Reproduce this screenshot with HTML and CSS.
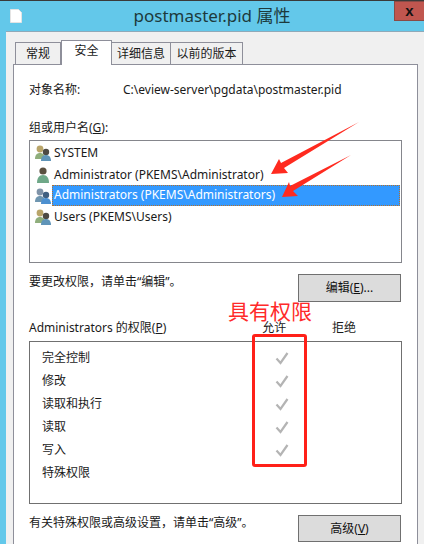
FILE: index.html
```html
<!DOCTYPE html>
<html lang="zh-CN">
<head>
  <meta charset="UTF-8">
  <meta name="viewport" content="width=device-width, initial-scale=1.0">
  <title>postmaster.pid 属性</title>
  <link rel="stylesheet" href="styles.css">
</head>
<body>
  <svg width="0" height="0" class="defs">
    <defs>
      <symbol id="group" viewBox="0 0 18 18">
        <circle cx="6" cy="5" r="3.4" fill="#b9a56a"/>
        <path d="M1 15c0-4 2-6 5-6s5 2 5 6z" fill="#8fae7c"/>
        <circle cx="12" cy="8" r="3.2" fill="#4d4a44"/>
        <path d="M7 17c0-4 2-6 5-6s5 2 5 6z" fill="#5f94b8"/>
      </symbol>
      <symbol id="group-sel" viewBox="0 0 18 18">
        <circle cx="6" cy="5" r="3.4" fill="#7f93a8"/>
        <path d="M1 15c0-4 2-6 5-6s5 2 5 6z" fill="#6f96b0"/>
        <circle cx="12" cy="8" r="3.2" fill="#3f5f80"/>
        <path d="M7 17c0-4 2-6 5-6s5 2 5 6z" fill="#4d90d0"/>
      </symbol>
      <symbol id="user" viewBox="0 0 18 18">
        <circle cx="9" cy="5" r="3.6" fill="#5a5040"/>
        <path d="M3 17c0-5 2-8 6-8s6 3 6 8z" fill="#6fa888"/>
      </symbol>
      <symbol id="tick" viewBox="0 0 14 14">
        <path d="M1.5 7.5 5.5 12 12.5 2" fill="none" stroke="#b4b4b4" stroke-width="2.2"/>
      </symbol>
    </defs>
  </svg>

  <div class="window">
    <div class="titlebar">
      <svg class="file-icon" width="12" height="14" viewBox="0 0 12 14">
        <path d="M0.5 0.5h8l3 3v10h-11z" fill="#fff" stroke="#e4e4e4"/>
      </svg>
      <span class="title">postmaster.pid 属性</span>
      <div class="close">x</div>
    </div>

    <div class="dialog">
      <div class="tabs">
        <div class="tab tab-first">常规</div>
        <div class="tab tab-active">安全</div>
        <div class="tab tab-details">详细信息</div>
        <div class="tab tab-prev">以前的版本</div>
      </div>

      <div class="panel">
        <div class="object-row">
          <span class="object-label">对象名称:</span>
          <span>C:\eview-server\pgdata\postmaster.pid</span>
        </div>

        <div class="group-label">组或用户名(<u>G</u>):</div>
        <div class="listbox">
          <div class="user-row">
            <svg class="user-icon"><use href="#group"/></svg>
            <span class="user-name">SYSTEM</span>
          </div>
          <div class="user-row">
            <svg class="user-icon"><use href="#user"/></svg>
            <span class="user-name">Administrator (PKEMS\Administrator)</span>
          </div>
          <div class="user-row">
            <svg class="user-icon"><use href="#group-sel"/></svg>
            <span class="user-name selected">Administrators (PKEMS\Administrators)</span>
          </div>
          <div class="user-row">
            <svg class="user-icon"><use href="#group"/></svg>
            <span class="user-name">Users (PKEMS\Users)</span>
          </div>
        </div>

        <div class="action-row edit-row">
          <span>要更改权限，请单击“编辑”。</span>
          <button class="btn">编辑(<u>E</u>)...</button>
        </div>

        <div class="perm-head">
          <span class="perm-title">Administrators 的权限(<u>P</u>)</span>
          <span class="perm-col">允许</span>
          <span class="perm-col">拒绝</span>
        </div>
        <div class="permbox">
          <div class="perm-row"><span class="perm-name">完全控制</span><svg class="tick"><use href="#tick"/></svg></div>
          <div class="perm-row"><span class="perm-name">修改</span><svg class="tick"><use href="#tick"/></svg></div>
          <div class="perm-row"><span class="perm-name">读取和执行</span><svg class="tick"><use href="#tick"/></svg></div>
          <div class="perm-row"><span class="perm-name">读取</span><svg class="tick"><use href="#tick"/></svg></div>
          <div class="perm-row"><span class="perm-name">写入</span><svg class="tick"><use href="#tick"/></svg></div>
          <div class="perm-row"><span class="perm-name">特殊权限</span></div>
        </div>

        <div class="action-row advanced-row">
          <span>有关特殊权限或高级设置，请单击“高级”。</span>
          <button class="btn">高级(<u>V</u>)</button>
        </div>
      </div>
    </div>

    <!-- red annotations drawn on top of the screenshot -->
    <svg class="marks" width="424" height="544" viewBox="0 0 424 544">
      <path d="M359 122 281 163 279 159 271 174 288 173 284 168z" fill="#ff2a1f"/>
      <path d="M351 155 290 186 289 182 282 197 298 196 293 191z" fill="#ff2a1f"/>
    </svg>
    <div class="note-text">具有权限</div>
    <div class="note-box"></div>
  </div>
</body>
</html>
```

FILE: styles.css
```css
* { box-sizing: border-box; }

html, body {
  margin: 0;
  padding: 0;
}

body {
  width: 424px;
  height: 544px;
  overflow: hidden;
  font-family: "Noto Sans", "Noto Sans CJK SC", sans-serif;
  font-size: 12px;
  line-height: 16px;
  color: #1a1a1a;
}

.defs { position: absolute; }

.window {
  position: relative;
  width: 424px;
  height: 544px;
  overflow: hidden;
  background: #63c8ea;
  border-top: 1px solid #3a3a3a;
}

.titlebar {
  position: relative;
  height: 30px;
  display: flex;
  align-items: center;
  justify-content: center;
}

.file-icon {
  position: absolute;
  left: 10px;
  top: 8px;
}

.title {
  font-size: 17px;
  color: #1d3a3c;
}

.close {
  position: absolute;
  right: 0;
  top: 0;
  width: 30px;
  height: 20px;
  background: #c0564f;
  border: 1px solid #8a4a46;
  border-right: 0;
  color: #111;
  font-family: "Liberation Sans", sans-serif;
  font-size: 15px;
  font-weight: bold;
  line-height: 17px;
  text-align: center;
}

.dialog {
  margin-left: 6px;
  height: 513px;
  background: #f0f0f0;
  border-top: 1px solid #8fa9b8;
  padding: 8px 0 0 7px;
}

.tabs {
  display: flex;
  align-items: flex-end;
  height: 25px;
  padding-left: 2px;
  position: relative;
  z-index: 1;
  margin-bottom: -1px;
}

.tab {
  height: 22px;
  margin-bottom: 1px;
  background: #f0f0f0;
  border: 1px solid #8e8f9a;
  border-bottom: 0;
  border-left: 0;
  padding-top: 3px;
  text-align: center;
}

.tab-first { width: 46px; border-left: 1px solid #8e8f9a; }
.tab-active {
  width: 51px;
  height: 25px;
  margin-bottom: 0;
  background: #fff;
  border-left: 1px solid #8e8f9a;
  padding-top: 2px;
}
.tab-details { width: 59px; }
.tab-prev { width: 72px; }

.panel {
  width: 405px;
  height: 490px;
  background: #fff;
  border: 1px solid #8e8f9a;
  padding: 17px 15px 0;
}

.object-row {
  display: flex;
  height: 16px;
}

.object-label { width: 94px; }

.group-label {
  margin-top: 22px;
  height: 16px;
}

.listbox {
  width: 373px;
  height: 123px;
  margin-top: 4px;
  border: 1px solid #85868c;
  padding: 1px;
}

.user-row {
  height: 22px;
  display: flex;
  align-items: center;
  padding-left: 3px;
  font-size: 12px;
}

.user-row:nth-child(2), .user-row:nth-child(3) { height: 21px; }

.user-icon {
  width: 18px;
  height: 18px;
  flex: none;
}

.user-name { padding-left: 2px; }

.selected {
  flex: 1;
  align-self: stretch;
  line-height: 20px;
  background: #3399ff;
  color: #fff;
  outline: 1px dotted #b5702a;
  outline-offset: -1px;
}

.action-row {
  display: flex;
  justify-content: space-between;
  width: 373px;
}

.edit-row {
  margin-top: 11px;
  height: 28px;
}

.btn {
  width: 103px;
  height: 28px;
  margin-right: 1px;
  padding: 0;
  background: #dcdcdc;
  border: 1px solid #707070;
  border-radius: 0;
  font: inherit;
  color: #111;
}

.perm-head {
  display: flex;
  align-items: center;
  height: 16px;
  margin-top: 18px;
}

.perm-title { width: 240px; }
.perm-col { width: 72px; }

.permbox {
  width: 373px;
  height: 163px;
  margin-top: 5px;
  border: 1px solid #707070;
  padding-top: 4px;
}

.perm-row {
  height: 23px;
  display: flex;
  align-items: center;
  padding-left: 12px;
}

.perm-name { width: 233px; }

.tick {
  width: 14px;
  height: 14px;
}

.advanced-row {
  margin-top: 11px;
  height: 27px;
}

.advanced-row .btn { height: 27px; }

.marks {
  position: absolute;
  left: 0;
  top: -1px;
  pointer-events: none;
}

.note-text {
  position: absolute;
  left: 228px;
  top: 297px;
  font-size: 21px;
  line-height: 26px;
  color: #ff2a2a;
}

.note-box {
  position: absolute;
  left: 252px;
  top: 333px;
  width: 55px;
  height: 133px;
  border: 3px solid #ff2018;
  border-radius: 3px;
}
```
